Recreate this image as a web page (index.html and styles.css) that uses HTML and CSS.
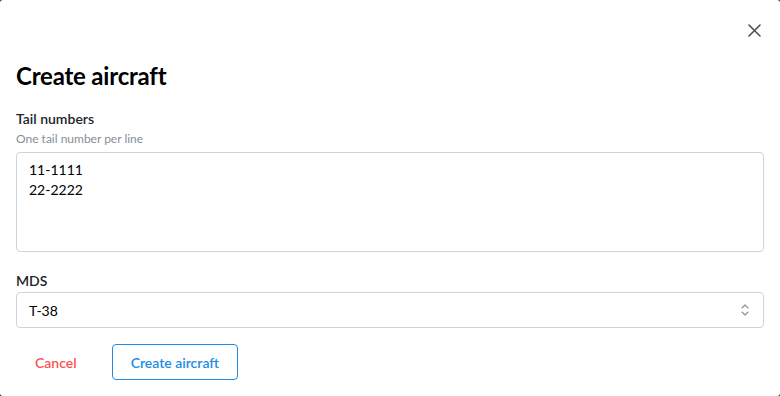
FILE: index.html
```html
<!DOCTYPE html>
<html lang="en">
<head>
  <meta charset="UTF-8" />
  <meta name="viewport" content="width=device-width, initial-scale=1.0"/>
  <title>Create aircraft</title>
  <link rel="stylesheet" href="styles.css">
</head>
<body>
  <div class="modal">
    <div class="modal-header">
      <button class="close-btn" aria-label="Close">
        <svg width="13" height="13" viewBox="0 0 13 13">
          <path d="M1 1L12 12M12 1L1 12" stroke="#495057" stroke-width="1.6" stroke-linecap="round"/>
        </svg>
      </button>
    </div>

    <h2 class="modal-title">Create aircraft</h2>

    <!-- Tail numbers -->
    <div class="field field-tails">
      <label class="field-label" for="tails">Tail numbers</label>
      <div class="field-desc">One tail number per line</div>
      <textarea id="tails" class="input textarea">11-1111
22-2222</textarea>
    </div>

    <!-- MDS -->
    <div class="field field-mds">
      <label class="field-label" for="mds">MDS</label>
      <div class="select-wrap">
        <select id="mds" class="input select">
          <option>T-38</option>
        </select>
        <svg class="select-icon" width="10" height="14" viewBox="0 0 10 14">
          <path d="M2 5L5 2L8 5M2 9L5 12L8 9" fill="none" stroke="#868e96" stroke-width="1.1" stroke-linecap="round" stroke-linejoin="round"/>
        </svg>
      </div>
    </div>

    <div class="actions">
      <button class="btn btn-subtle">Cancel</button>
      <button class="btn btn-outline">Create aircraft</button>
    </div>
  </div>
</body>
</html>
```

FILE: styles.css
```css
* {
  box-sizing: border-box;
}

body {
  margin: 0;
  background: #3a3a3a;
  font-family: 'Segoe UI', Lato, 'Noto Sans', sans-serif;
  color: #000;
}

.modal {
  width: 780px;
  height: 396px;
  background: #fff;
  border-radius: 3px;
  padding: 16px;
}

.modal-header {
  display: flex;
  justify-content: flex-end;
  height: 28px;
}

.close-btn {
  width: 28px;
  height: 28px;
  margin-right: -4px;
  border: none;
  background: transparent;
  display: flex;
  align-items: center;
  justify-content: center;
  padding: 0;
  cursor: pointer;
}

.modal-title {
  margin: 16px 0 0;
  font-size: 24px;
  font-weight: 700;
  line-height: 31px;
  letter-spacing: -0.2px;
}

.field {
  display: flex;
  flex-direction: column;
}

.field-tails {
  margin-top: 17px;
}

.field-mds {
  margin-top: 18px;
}

.field-label {
  font-size: 14px;
  font-weight: 600;
  line-height: 22px;
  color: #212529;
}

.field-desc {
  font-size: 12px;
  line-height: 18px;
  color: #868e96;
  margin-bottom: 4px;
}

.input {
  width: 100%;
  border: 1px solid #ced4da;
  border-radius: 4px;
  background: #fff;
  font-family: inherit;
  font-size: 14px;
  color: #000;
  outline: none;
}

.textarea {
  height: 100px;
  padding: 7px 12px;
  line-height: 20px;
  resize: none;
}

.select-wrap {
  position: relative;
}

.select {
  height: 36px;
  padding: 0 30px 0 12px;
  appearance: none;
  -webkit-appearance: none;
}

.select-icon {
  position: absolute;
  right: 14px;
  top: 11px;
  pointer-events: none;
}

.actions {
  display: flex;
  gap: 16px;
  margin-top: 16px;
}

.btn {
  height: 36px;
  padding: 0 18px;
  border-radius: 4px;
  font-family: inherit;
  font-size: 14px;
  font-weight: 600;
  cursor: pointer;
}

.btn-subtle {
  background: transparent;
  border: 1px solid transparent;
  color: #fa5252;
}

.btn-outline {
  background: #fff;
  border: 1px solid #228be6;
  color: #228be6;
}
```
